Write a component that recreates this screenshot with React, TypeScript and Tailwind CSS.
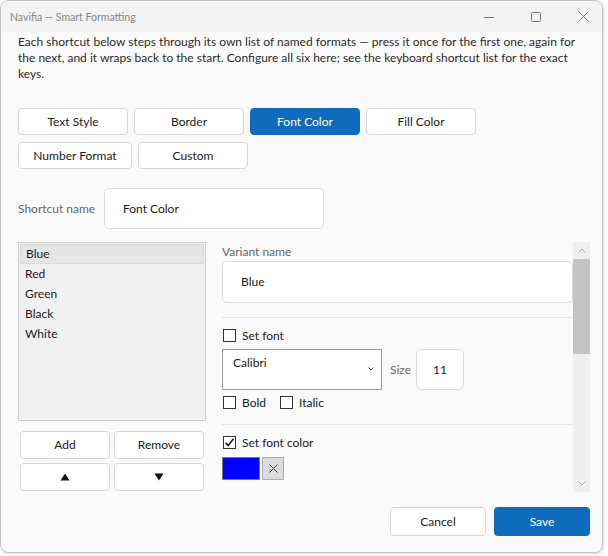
import React from 'react';

const tabs = [
  { label: 'Text Style', w: 'w-[110px]' },
  { label: 'Border', w: 'w-[110px]' },
  { label: 'Font Color', w: 'w-[110px]', active: true },
  { label: 'Fill Color', w: 'w-[110px]' },
  { label: 'Number Format', w: 'w-[114px]' },
  { label: 'Custom', w: 'w-[110px]' },
];

const variants = ['Blue', 'Red', 'Green', 'Black', 'White'];

function Check({ checked = false }: { checked?: boolean }) {
  return (
    <span className="w-[13px] h-[13px] border border-[#333] bg-white flex items-center justify-center shrink-0">
      {checked && (
        <svg width="11" height="11" viewBox="0 0 11 11">
          <path d="M1.5 5.8 L4.2 8.5 L9.5 1.8" fill="none" stroke="#1a1a1a" strokeWidth="1.6" />
        </svg>
      )}
    </span>
  );
}

export default function App() {
  return (
    <div className="w-[608px] h-[556px] bg-white font-['Lato',sans-serif] text-[12px] text-[#1b1b1b]">
      <div className="w-[603px] h-[553px] border border-[#c4c4c4] rounded-[8px] bg-[#fafafa] flex flex-col overflow-hidden shadow-[1px_1px_3px_rgba(0,0,0,0.15)]">
        {/* ─── Title bar ─────────────────────────────────────────── */}
        <div className="h-[31px] bg-[#f3f3f3] flex items-center pl-[9px] shrink-0">
          <span className="mt-[2px] text-[#868686] text-[10.5px]">Navifia — Smart Formatting</span>
          <div className="ml-auto flex items-center gap-[37px] pr-[13px]">
            <svg width="10" height="10" viewBox="0 0 10 10"><path d="M0 5.5h10" stroke="#777" strokeWidth="1" /></svg>
            <svg width="10" height="10" viewBox="0 0 10 10"><rect x="0.5" y="0.5" width="9" height="9" rx="1" fill="none" stroke="#777" /></svg>
            <svg width="11" height="11" viewBox="0 0 11 11"><path d="M0.5 0.5l10 10M10.5 0.5l-10 10" stroke="#777" strokeWidth="1" /></svg>
          </div>
        </div>

        {/* ─── Body ──────────────────────────────────────────────── */}
        <div className="flex-1 flex flex-col pl-[17px] pr-[12px]">
          <p className="mt-[2px] leading-[16px] text-[#2b2b2b] whitespace-nowrap">
            Each shortcut below steps through its own list of named formats — press it once for the first one, again for
            <br />
            the next, and it wraps back to the start. Configure all six here; see the keyboard shortcut list for the exact
            <br />
            keys.
          </p>

          {/* Shortcut tabs */}
          <div className="mt-[26px] w-[572px] flex flex-wrap gap-x-[6px] gap-y-[7px]">
            {tabs.map((t) => (
              <button
                key={t.label}
                className={`${t.w} h-[27px] rounded-[4px] ${
                  t.active
                    ? 'bg-[#0f6cbd] text-white border border-[#0f6cbd]'
                    : 'bg-white border border-[#d6d6d6] text-[#1b1b1b]'
                }`}
              >
                {t.label}
              </button>
            ))}
          </div>

          {/* Shortcut name */}
          <div className="mt-[19px] flex items-center">
            <span className="w-[86px] text-[#666]">Shortcut name</span>
            <div className="w-[220px] h-[41px] bg-white border border-[#dcdcdc] rounded-[5px] flex items-center pl-[18px]">
              Font Color
            </div>
          </div>

          {/* Main area */}
          <div className="mt-[13px] flex gap-[16px]">
            {/* Left list */}
            <div className="w-[188px] flex flex-col">
              <div className="h-[179px] bg-[#f1f1f1] border border-[#cfcfcf] p-[1px]">
                {variants.map((v, i) => (
                  <div
                    key={v}
                    className={`h-[20px] flex items-center pl-[5px] ${
                      i === 0 ? 'bg-[#e6e6e6] border border-[#dadada] pl-[4px]' : ''
                    }`}
                  >
                    {v}
                  </div>
                ))}
              </div>
              <div className="mt-[10px] px-[2px] grid grid-cols-2 gap-[4px]">
                <button className="h-[28px] bg-white border border-[#d6d6d6] rounded-[4px]">Add</button>
                <button className="h-[28px] bg-white border border-[#d6d6d6] rounded-[4px]">Remove</button>
                <button className="h-[28px] bg-white border border-[#d6d6d6] rounded-[4px] flex items-center justify-center">
                  <svg width="10" height="8" viewBox="0 0 10 8"><path d="M5 0.5L9.5 7.5H0.5Z" fill="#111" /></svg>
                </button>
                <button className="h-[28px] bg-white border border-[#d6d6d6] rounded-[4px] flex items-center justify-center">
                  <svg width="10" height="8" viewBox="0 0 10 8"><path d="M0.5 0.5H9.5L5 7.5Z" fill="#111" /></svg>
                </button>
              </div>
            </div>

            {/* Right scroll area */}
            <div className="w-[368px] h-[250px] flex overflow-hidden">
              <div className="w-[351px] flex flex-col">
                <div className="h-[19px] flex items-center text-[#666]">Variant name</div>
                <div className="h-[42px] bg-white border border-[#dcdcdc] rounded-[5px] flex items-center pl-[18px]">
                  Blue
                </div>
                <div className="mt-[14px] border-t border-[#e3e3e3]" />

                <div className="mt-[11px] h-[13px] flex items-center gap-[6px] pl-[1px]">
                  <Check />
                  <span>Set font</span>
                </div>
                <div className="mt-[7px] flex items-center">
                  <div className="w-[160px] h-[41px] bg-white border border-[#9c9c9c] flex pl-[10px] pr-[6px] pt-[4px]">
                    <span>Calibri</span>
                    <svg className="ml-auto mt-[12px]" width="8" height="6" viewBox="0 0 8 6"><path d="M1.5 1.5L4 4L6.5 1.5" fill="none" stroke="#555" /></svg>
                  </div>
                  <span className="ml-[8px] text-[#666]">Size</span>
                  <div className="ml-[5px] w-[48px] h-[41px] bg-white border border-[#dcdcdc] rounded-[5px] flex items-center justify-center">
                    11
                  </div>
                </div>
                <div className="mt-[6px] h-[13px] flex items-center pl-[1px]">
                  <Check />
                  <span className="ml-[6px]">Bold</span>
                  <span className="ml-[14px]"><Check /></span>
                  <span className="ml-[6px]">Italic</span>
                </div>
                <div className="mt-[15px] border-t border-[#e3e3e3]" />

                <div className="mt-[11px] h-[13px] flex items-center gap-[6px] pl-[1px]">
                  <Check checked />
                  <span>Set font color</span>
                </div>
                <div className="mt-[8px] flex items-center gap-[2px]">
                  <div className="w-[38px] h-[23px] bg-[#0000ff] border border-[#7a7a7a]" />
                  <div className="w-[22px] h-[23px] bg-[#dcdcdc] border border-[#adadad] flex items-center justify-center">
                    <svg width="9" height="9" viewBox="0 0 9 9"><path d="M0.5 0.5l8 8M8.5 0.5l-8 8" stroke="#444" /></svg>
                  </div>
                </div>
              </div>

              {/* Scrollbar */}
              <div className="w-[17px] h-full bg-[#efefef] flex flex-col">
                <div className="h-[17px] flex items-center justify-center">
                  <svg width="8" height="5" viewBox="0 0 8 5"><path d="M0.5 4.5L4 1L7.5 4.5" fill="none" stroke="#aaa" /></svg>
                </div>
                <div className="h-[95px] bg-[#c4c4c4]" />
                <div className="mt-auto h-[17px] flex items-center justify-center">
                  <svg width="8" height="5" viewBox="0 0 8 5"><path d="M0.5 0.5L4 4L7.5 0.5" fill="none" stroke="#aaa" /></svg>
                </div>
              </div>
            </div>
          </div>

          {/* Footer */}
          <div className="mt-[15px] flex justify-end gap-[8px]">
            <button className="w-[96px] h-[29px] bg-white border border-[#d6d6d6] rounded-[4px]">Cancel</button>
            <button className="w-[96px] h-[29px] bg-[#0f6cbd] text-white rounded-[4px]">Save</button>
          </div>
        </div>
      </div>
    </div>
  );
}
